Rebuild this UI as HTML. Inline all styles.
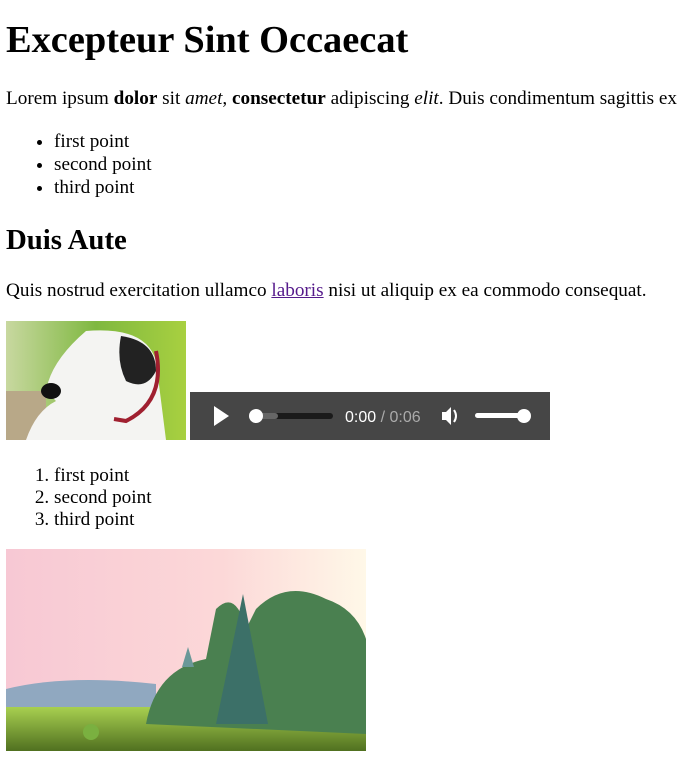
<!DOCTYPE html>
<html><head><meta charset="utf-8"><style>
body{margin:0;width:684px;height:757px;position:relative;font-family:"Liberation Serif",serif;color:#000;background:#fff;overflow:hidden}
.a{position:absolute;left:6px;margin:0;white-space:nowrap}
h1{font-size:38.4px;line-height:44px;font-weight:bold}
h2{font-size:28.8px;line-height:33px;font-weight:bold}
p,li{font-size:19.2px}
ul,ol{padding-left:48px}
ul li{line-height:23px}
ol li{line-height:22px}
a{color:#551a8b}
</style></head><body>
<h1 class="a" style="top:18px">Excepteur Sint Occaecat</h1>
<p class="a" style="top:88px;line-height:22px">Lorem ipsum <b>dolor</b> sit <i>amet</i>, <b>consectetur</b> adipiscing <i>elit</i>. Duis condimentum sagittis ex</p>
<ul class="a" style="top:130px;left:6px"><li>first point</li><li>second point</li><li>third point</li></ul>
<h2 class="a" style="top:224px">Duis Aute</h2>
<p class="a" style="top:280px;line-height:22px">Quis nostrud exercitation ullamco <a href="#">laboris</a> nisi ut aliquip ex ea commodo consequat.</p>
<svg style="position:absolute;left:6px;top:321px" width="180" height="119">
<defs><linearGradient id="g" x1="0" x2="1"><stop offset="0" stop-color="#c8d8a0"/><stop offset=".5" stop-color="#7fb840"/><stop offset="1" stop-color="#a8d040"/></linearGradient></defs>
<rect width="180" height="119" fill="url(#g)"/>
<rect x="0" y="70" width="40" height="49" fill="#b8a888"/>
<path d="M80 10 Q140 5 150 40 L160 119 L20 119 Q30 90 50 80 L40 70 Q45 40 80 10Z" fill="#f4f4f2"/>
<path d="M115 15 Q150 20 150 50 Q140 70 120 60 Q110 40 115 15Z" fill="#222"/>
<ellipse cx="45" cy="70" rx="10" ry="8" fill="#111"/>
<path d="M150 30 Q160 80 120 100 L108 98" stroke="#a02030" stroke-width="4" fill="none"/>
</svg>
<div style="position:absolute;left:190px;top:392px;width:360px;height:48px;background:#464646"></div>
<svg style="position:absolute;left:190px;top:392px" width="360" height="48">
<path d="M24 14 L24 34 L39 24Z" fill="#fff"/>
<rect x="60" y="21" width="83" height="6" rx="3" fill="#1a1a1a"/>
<rect x="60" y="21" width="28" height="6" rx="3" fill="#666"/>
<circle cx="66" cy="24" r="7" fill="#fff"/>
<text x="155" y="30" font-family="Liberation Sans,sans-serif" font-size="16" fill="#fff">0:00 <tspan fill="#aaa">/ 0:06</tspan></text>
<path d="M252 20 h4 l5-5 v18 l-5-5 h-4Z" fill="#fff"/>
<path d="M264 18 q4 6 0 12" stroke="#fff" stroke-width="2" fill="none"/>
<rect x="285" y="21" width="50" height="5" rx="2.5" fill="#fff"/>
<circle cx="334" cy="24" r="7" fill="#fff"/>
</svg>
<ol class="a" style="top:465px"><li>first point</li><li>second point</li><li>third point</li></ol>
<svg style="position:absolute;left:6px;top:549px" width="360" height="202">
<defs><linearGradient id="s" x1="0" y1="0" x2="1" y2="0"><stop offset="0" stop-color="#f7c8d4"/><stop offset=".6" stop-color="#fcd8d8"/><stop offset="1" stop-color="#fff8e8"/></linearGradient>
<linearGradient id="gr" x1="0" y1="0" x2="0" y2="1"><stop offset="0" stop-color="#a8d050"/><stop offset="1" stop-color="#507020"/></linearGradient></defs>
<rect width="360" height="202" fill="url(#s)"/>
<path d="M0 140 Q60 125 150 135 L150 165 L0 165Z" fill="#90a8c0"/>
<rect x="0" y="158" width="360" height="44" fill="url(#gr)"/>
<path d="M140 175 Q150 120 200 110 L210 60 Q230 40 240 80 L250 60 Q280 30 320 50 Q350 60 360 90 L360 185 Z" fill="#4a8050"/>
<path d="M210 175 L237 45 L262 175Z" fill="#3c7068"/>
<path d="M176 118 L182 98 L188 118Z" fill="#6a9898"/>
<circle cx="85" cy="183" r="8" fill="#7ab040"/>
</svg>
</body></html>
